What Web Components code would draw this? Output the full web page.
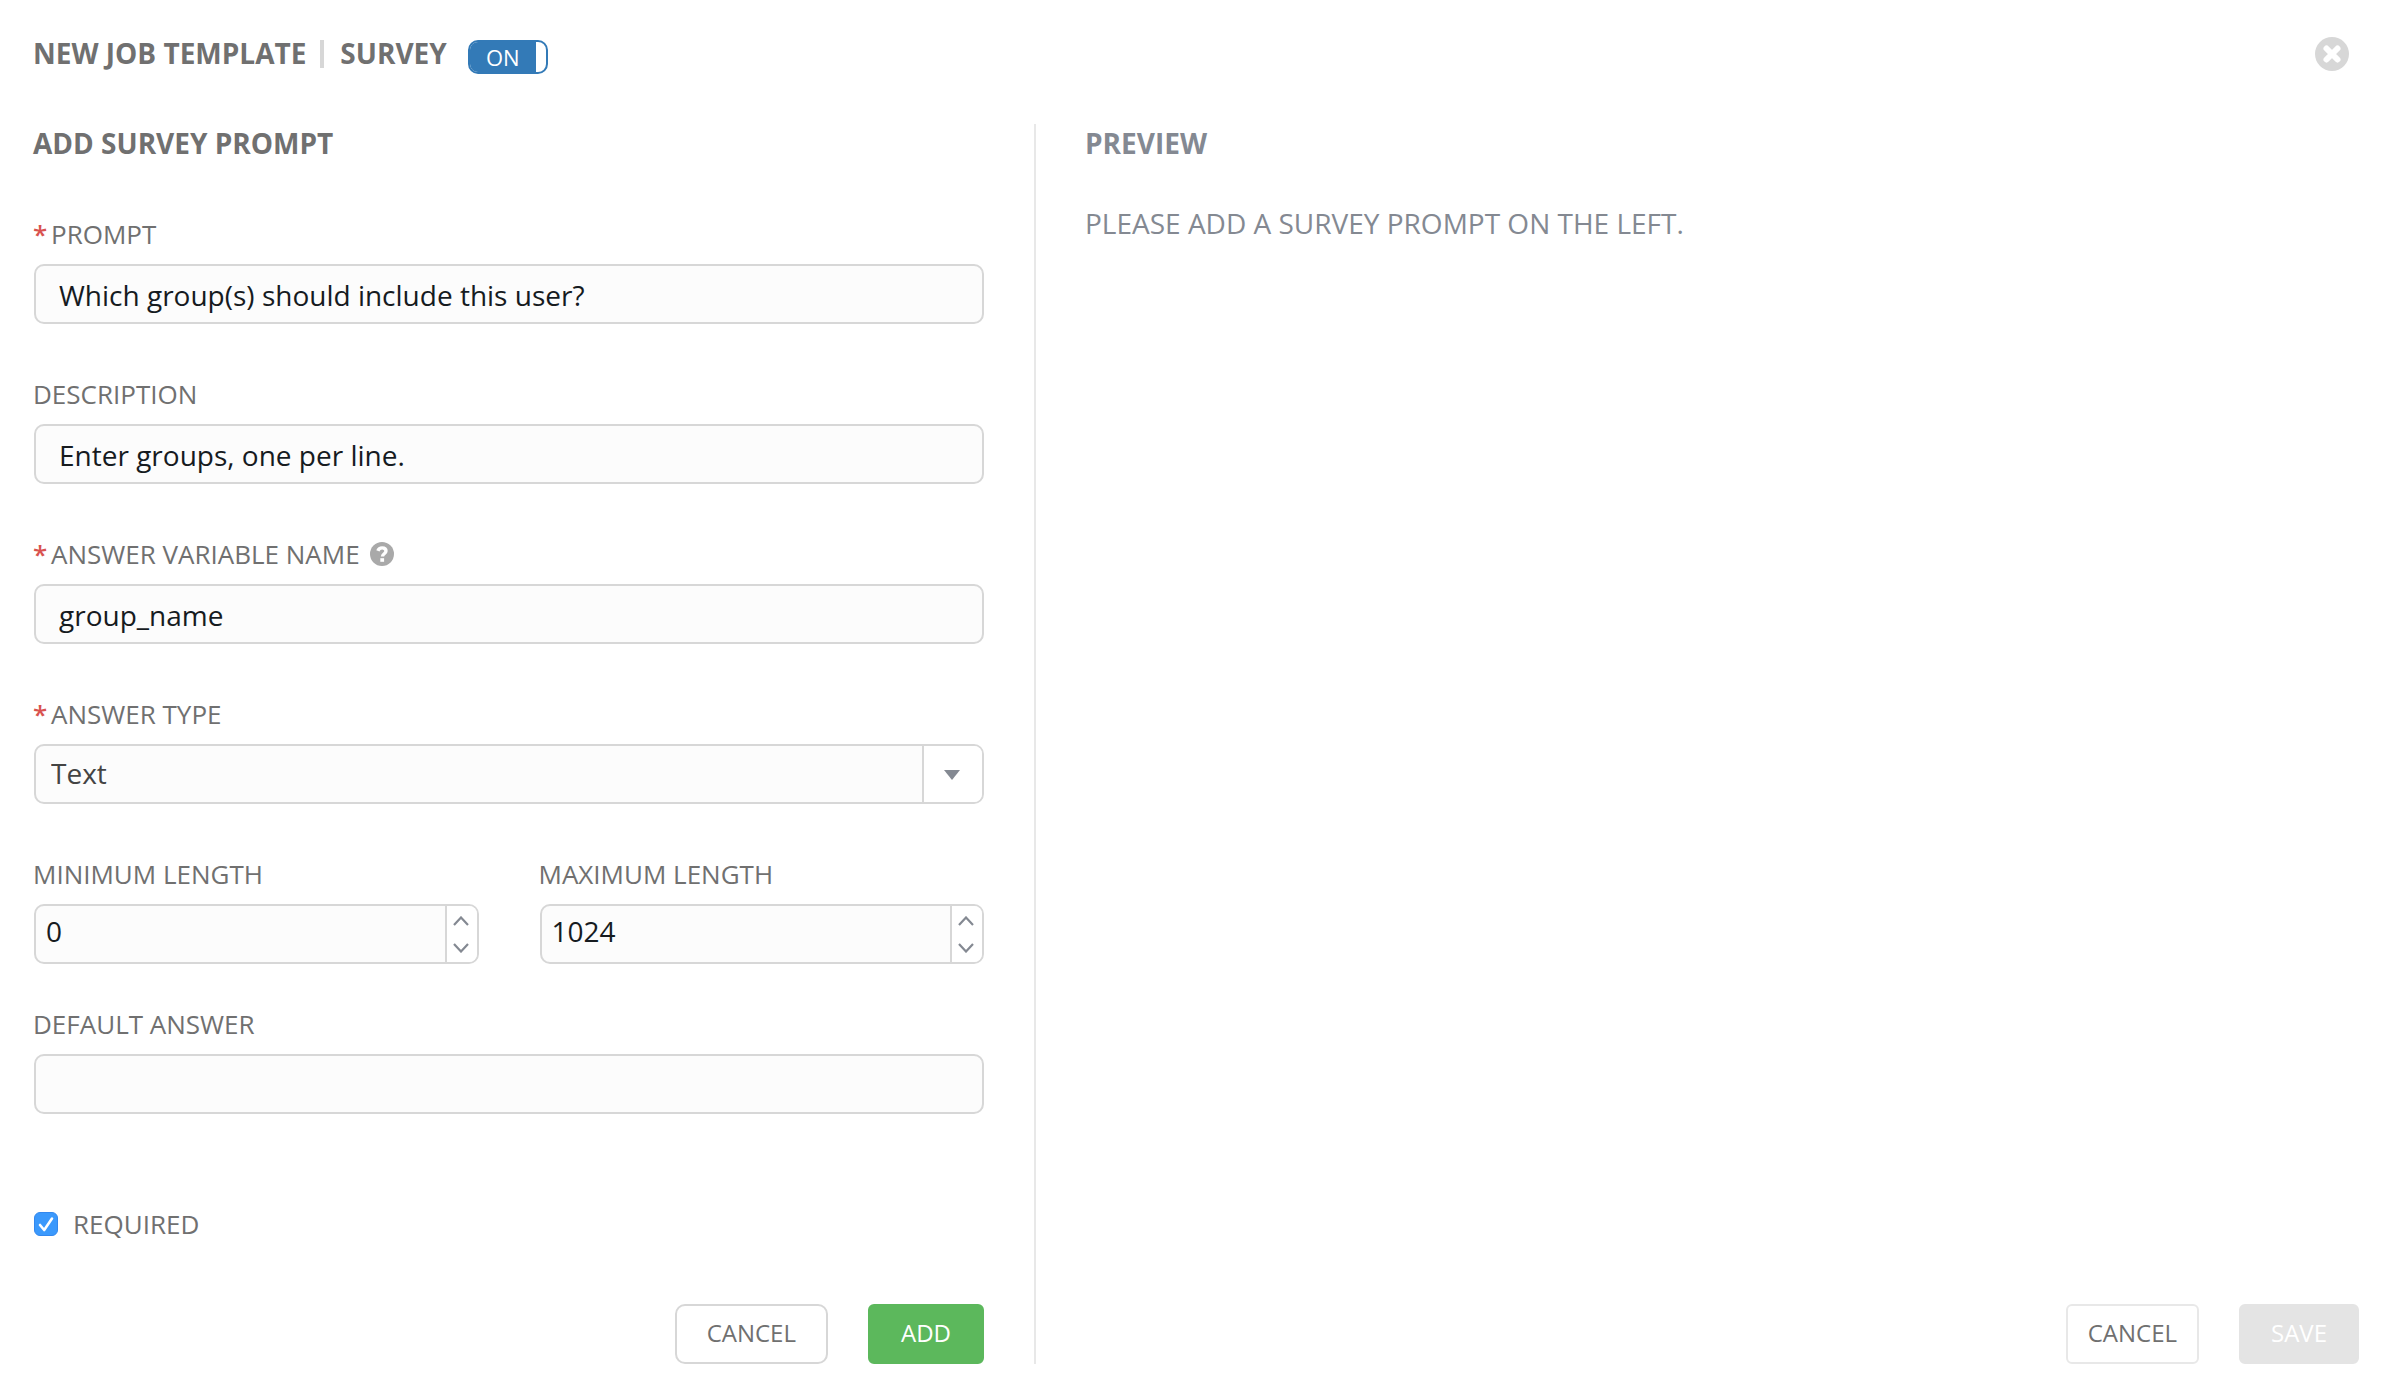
<!DOCTYPE html>
<html lang="en">
<head>
<meta charset="utf-8">
<title>New Job Template | Survey</title>
<style>
  body { margin: 0; background: #fff; color: #707070; font: 28px/38px "Open Sans", "Noto Sans", sans-serif; }
</style>
</head>
<body>
<survey-maker></survey-maker>

<script>
const BASE = `
  *, *::before, *::after { box-sizing: border-box; }
  button, input, select { font: inherit; margin: 0; }
  button { cursor: pointer; }
`;

class BaseElement extends HTMLElement {
  connectedCallback() {
    if (this.shadowRoot) return;
    this.attachShadow({ mode: "open" }).innerHTML = `<style>${BASE}</style>` + this.render();
    this.ready();
  }
  ready() {}
}

const LABEL_CSS = `
  :host { display: block; }
  .label { display: flex; align-items: center; margin-bottom: 12px; font-size: 26px; line-height: 36px; color: #707070; }
  .star { width: 18px; color: #d9534f; font-weight: 600; }
  .box { display: flex; height: 60px; margin-left: 1px; border: 2px solid #d7d7d7; border-radius: 10px; overflow: hidden; background: #fcfcfc; }
  .box input { flex: 1; min-width: 0; height: 56px; border: 0; background: transparent; color: #161b1f; outline: none; }
`;

const labelMarkup = el => `
  <div class="label">
    ${el.hasAttribute("starred") ? `<span class="star">*</span>` : ""}
    <label for="control">${el.getAttribute("label")}</label>
    <slot name="hint"></slot>
  </div>`;

class HelpHint extends BaseElement {
  render() {
    return `
    <style>
      :host { display: inline-flex; margin-left: 10px; }
      button { display: flex; padding: 0; border: 0; background: none; }
    </style>
    <button type="button" aria-label="Help">
      <svg width="24" height="24" viewBox="0 0 24 24" aria-hidden="true">
        <circle cx="12" cy="12" r="12" fill="#a9a9a9"/>
        <path d="M7.9 8.9C8.6 6.9 10 5.9 12.1 5.9c2.200 0 3.900 1.200 3.900 3.200 0 2.700-3.500 2.600-3.500 5.300" fill="none" stroke="#fff" stroke-width="3.400"/>
        <rect x="10.300" y="16.200" width="3.800" height="3.600" fill="#fff"/>
      </svg>
    </button>`;
  }
}

class TextField extends BaseElement {
  render() {
    return `
    <style>${LABEL_CSS}
      .box input { padding: 2px 23px 0; }
    </style>
    ${labelMarkup(this)}
    <div class="box"><input id="control" type="text" value="${this.getAttribute("value") || ""}"></div>`;
  }
}

class SelectField extends BaseElement {
  render() {
    return `
    <style>${LABEL_CSS}
      .box { display: grid; grid-template-columns: 1fr 60px; }
      select { grid-area: 1 / 1 / 2 / 3; height: 56px; padding: 0 76px 2px 15px; border: 0; background: transparent; color: #444; appearance: none; outline: none; }
      .arrow { grid-area: 1 / 2; display: flex; align-items: center; justify-content: center; padding: 2px 2px 0 0; border-left: 2px solid #d7d7d7; background: #fff; pointer-events: none; }
    </style>
    ${labelMarkup(this)}
    <div class="box">
      <select id="control"><option>Text</option></select>
      <span class="arrow"><svg width="16" height="10" viewBox="0 0 16 10" aria-hidden="true"><path d="M0 0H16L8 10Z" fill="#848992"/></svg></span>
    </div>`;
  }
}

class NumberField extends BaseElement {
  render() {
    const chevron = d => `<svg width="16" height="10" viewBox="0 0 16 10" aria-hidden="true"><path d="${d}" fill="none" stroke="#848992" stroke-width="2.200"/></svg>`;
    return `
    <style>${LABEL_CSS}
      .box input { padding: 0 10px 6px; appearance: textfield; -moz-appearance: textfield; }
      .box input::-webkit-inner-spin-button { appearance: none; margin: 0; }
      .steps { display: flex; flex-direction: column; width: 32px; padding-top: 1px; border-left: 2px solid #d7d7d7; background: #fff; }
      .steps button { display: flex; flex: 1; align-items: center; justify-content: center; padding: 0 2px 0 0; border: 0; background: none; }
    </style>
    ${labelMarkup(this)}
    <div class="box">
      <input id="control" type="number" value="${this.getAttribute("value")}">
      <div class="steps">
        <button type="button" aria-label="Increase">${chevron("M1 9L8 1.500L15 9")}</button>
        <button type="button" aria-label="Decrease">${chevron("M1 1L8 8.500L15 1")}</button>
      </div>
    </div>`;
  }
  ready() {
    const input = this.shadowRoot.querySelector("input");
    const [up, down] = this.shadowRoot.querySelectorAll("button");
    up.onclick = () => input.stepUp();
    down.onclick = () => input.stepDown();
  }
}

class CheckField extends BaseElement {
  render() {
    return `
    <style>
      :host { display: block; }
      label { display: inline-flex; align-items: center; gap: 15px; padding-left: 1px; font-size: 26px; line-height: 36px; }
      .tick { display: grid; width: 24px; height: 24px; }
      input { grid-area: 1 / 1; width: 24px; height: 24px; appearance: none; border-radius: 6px; border: 1px solid #b5b5b5; background: #fff; }
      input:checked { border-color: #3388ee; background: #3b99fc; }
      svg { grid-area: 1 / 1; pointer-events: none; visibility: hidden; }
      input:checked + svg { visibility: visible; }
    </style>
    <label>
      <span class="tick"><input type="checkbox" checked>
        <svg width="24" height="24" viewBox="0 0 24 24" aria-hidden="true"><path d="M6 13L10.200 18L18 6.500" fill="none" stroke="#fff" stroke-width="2.600" stroke-linecap="round" stroke-linejoin="round"/></svg>
      </span>
      <slot></slot>
    </label>`;
  }
}

class ActionButton extends BaseElement {
  render() {
    return `
    <style>
      :host { display: block; }
      button { display: block; height: 60px; padding: 0 30px 2px; border: 2px solid #d7d7d7; border-radius: 10px; background: #fff; color: #707070; font-size: 24px; line-height: 34px; }
      :host([kind="plain"]) button { padding: 0 20px 2px; border-color: #e8e8e8; border-radius: 6px; }
      :host([kind="add"]) button { padding: 0 31px 2px; border-color: #5cb85c; border-radius: 6px; background: #5cb85c; color: #fff; }
      :host([kind="save"]) button { border-color: #e4e4e4; border-radius: 6px; background: #e4e4e4; color: #fff; cursor: default; }
    </style>
    <button type="button" ${this.getAttribute("kind") === "save" ? "disabled" : ""}><slot></slot></button>`;
  }
}

class ToggleSwitch extends BaseElement {
  render() {
    return `
    <style>
      :host { display: block; }
      button { display: flex; width: 80px; height: 34px; padding: 0; border: 2px solid #337ab7; border-radius: 10px; overflow: hidden; background: #fff; color: #fff; font-size: 22px; line-height: 30px; }
      span { flex: 1; margin-right: 10px; background: #337ab7; }
    </style>
    <button type="button" role="switch" aria-checked="true"><span><slot></slot></span></button>`;
  }
}

class SurveyHeader extends BaseElement {
  render() {
    return `
    <style>
      :host { display: flex; align-items: center; height: 40px; padding-right: 10px; }
      h1 { display: flex; align-items: center; align-self: flex-start; margin: 0; font-size: 28px; line-height: 38px; font-weight: 700; }
      .rule { width: 4px; height: 28px; margin: 2px 16px 0 14px; background: #d7d7d7; }
      toggle-switch { align-self: flex-end; margin-left: 21px; }
      .close { display: flex; margin-left: auto; padding: 0; border: 0; background: none; }
    </style>
    <h1><span>NEW JOB TEMPLATE</span><span class="rule"></span><span>SURVEY</span></h1>
    <toggle-switch>ON</toggle-switch>
    <button class="close" type="button" aria-label="Close">
      <svg width="34" height="34" viewBox="0 0 34 34" aria-hidden="true">
        <circle cx="17" cy="17" r="17" fill="#d7d7d7"/>
        <path d="M11.500 11.500L22.500 22.500M22.500 11.500L11.500 22.500" stroke="#fff" stroke-width="6" stroke-linecap="round"/>
      </svg>
    </button>`;
  }
}

class PromptForm extends BaseElement {
  render() {
    return `
    <style>
      :host { display: flex; flex-direction: column; padding-right: 50px; border-right: 2px solid #e8e8e8; }
      h2 { margin: 0 0 54px; font-size: 28px; line-height: 38px; font-weight: 700; }
      .fields { display: grid; gap: 52px; margin-bottom: 42px; }
      .pair { display: grid; grid-template-columns: 1fr 1fr; gap: 60px; }
      check-field { margin-top: 92px; }
      .actions { display: flex; justify-content: flex-end; gap: 40px; margin-top: auto; padding-top: 40px; }
    </style>
    <h2>ADD SURVEY PROMPT</h2>
    <div class="fields">
      <text-field starred label="PROMPT" value="Which group(s) should include this user?"></text-field>
      <text-field label="DESCRIPTION" value="Enter groups, one per line."></text-field>
      <text-field starred label="ANSWER VARIABLE NAME" value="group_name"><help-hint slot="hint"></help-hint></text-field>
      <select-field starred label="ANSWER TYPE"></select-field>
      <div class="pair">
        <number-field label="MINIMUM LENGTH" value="0"></number-field>
        <number-field label="MAXIMUM LENGTH" value="1024"></number-field>
      </div>
    </div>
    <text-field label="DEFAULT ANSWER"></text-field>
    <check-field>REQUIRED</check-field>
    <div class="actions">
      <action-button>CANCEL</action-button>
      <action-button kind="add">ADD</action-button>
    </div>`;
  }
}

class SurveyPreview extends BaseElement {
  render() {
    return `
    <style>
      :host { display: flex; flex-direction: column; padding-left: 49px; color: #848992; }
      h2 { margin: 0 0 42px; font-size: 28px; line-height: 38px; font-weight: 700; }
      p { margin: 0; }
      .actions { display: flex; justify-content: flex-end; gap: 40px; margin-top: auto; padding-top: 40px; }
    </style>
    <h2>PREVIEW</h2>
    <p>PLEASE ADD A SURVEY PROMPT ON THE LEFT.</p>
    <div class="actions">
      <action-button kind="plain">CANCEL</action-button>
      <action-button kind="save">SAVE</action-button>
    </div>`;
  }
}

class SurveyMaker extends BaseElement {
  render() {
    return `
    <style>
      :host { display: flex; flex-direction: column; gap: 50px; min-height: 100vh; box-sizing: border-box; padding: 34px 25px 34px 33px; }
      main { display: grid; grid-template-columns: 1003fr 1323fr; flex: 1; }
    </style>
    <survey-header></survey-header>
    <main>
      <prompt-form></prompt-form>
      <survey-preview></survey-preview>
    </main>`;
  }
}

customElements.define("help-hint", HelpHint);
customElements.define("text-field", TextField);
customElements.define("select-field", SelectField);
customElements.define("number-field", NumberField);
customElements.define("check-field", CheckField);
customElements.define("action-button", ActionButton);
customElements.define("toggle-switch", ToggleSwitch);
customElements.define("survey-header", SurveyHeader);
customElements.define("prompt-form", PromptForm);
customElements.define("survey-preview", SurveyPreview);
customElements.define("survey-maker", SurveyMaker);
</script>
</body>
</html>
